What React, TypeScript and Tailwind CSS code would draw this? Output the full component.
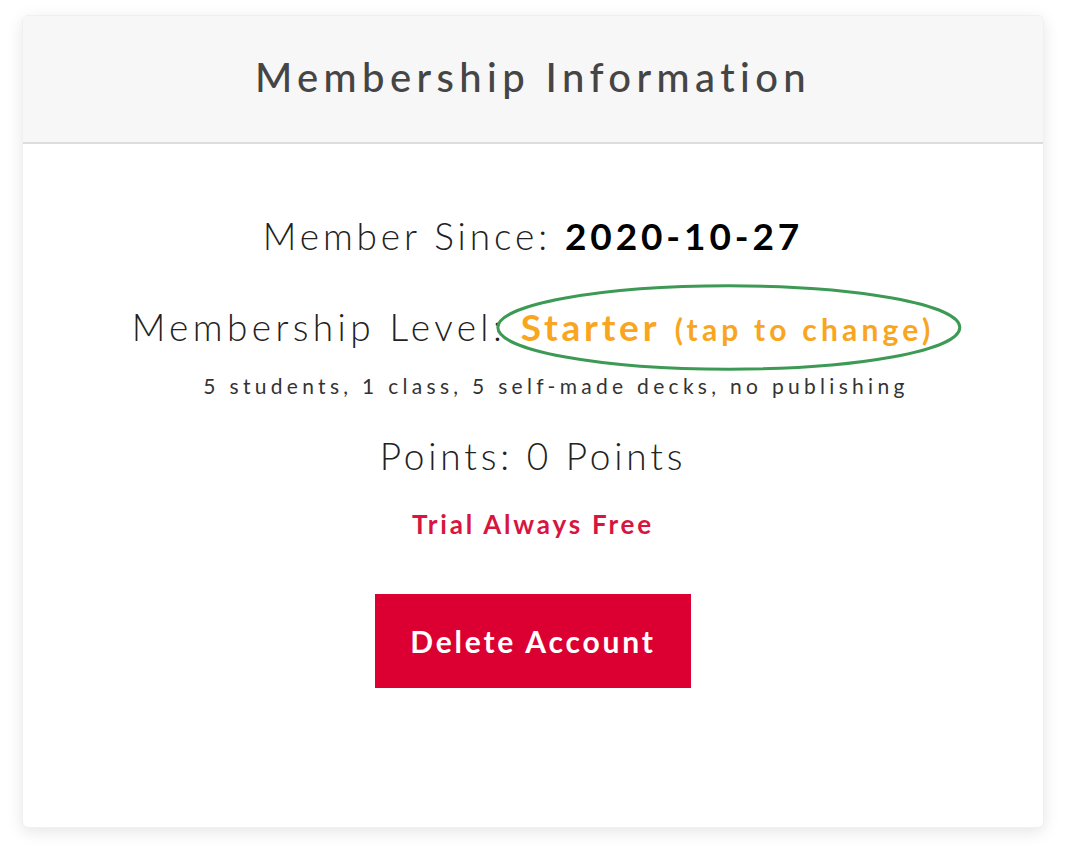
import React from "react";

export default function App() {
  return (
    <div className="min-h-[850px] w-[1073px] bg-white pt-[15px] pl-[22px]" style={{ fontFamily: "Lato, 'Noto Sans', sans-serif" }}>
      <div className="w-[1022px] h-[813px] rounded-[6px] bg-white shadow-[0_4px_16px_rgba(0,0,0,0.10)] border border-[#f0f0f0] overflow-hidden flex flex-col">
        <div className="h-[128px] bg-[#f7f7f7] border-b-2 border-[#dcdcdc] flex items-center justify-center">
          <h1 className="text-[40px] font-medium text-[#454545] tracking-[5.4px] leading-none mt-[-4px]">Membership Information</h1>
        </div>
        <div className="flex flex-col items-center">
          <div className="mt-[70px] text-[37px] leading-[44px] text-[#222] tracking-[3.9px] font-light">
            Member Since: <span className="font-bold text-black tracking-[3.9px]">2020-10-27</span>
          </div>
          <div className="mt-[47px] text-[37px] leading-[44px] text-[#222] tracking-[4.4px] font-light">
            Membership Level:{" "}
            <span className="relative">
              <span className="font-bold text-[#f9a51e] tracking-[3.8px]">Starter</span>{" "}
              <span className="font-bold text-[#f9a51e] text-[30px] tracking-[4.2px]">(tap to change)</span>
              <svg className="absolute left-[-25px] top-[-20px] w-[calc(100%+52px)] h-[calc(100%+42px)] pointer-events-none overflow-visible" viewBox="0 0 100 100" preserveAspectRatio="none">
                <ellipse cx="50" cy="50" rx="49.6" ry="48" fill="none" stroke="#3d9a55" strokeWidth="3" vectorEffect="non-scaling-stroke" />
              </svg>
            </span>
          </div>
          <div className="mt-[22px] pl-[46px] text-[21px] leading-[26px] text-[#333] tracking-[4.3px]">
            5 students, 1 class, 5 self-made decks, no publishing
          </div>
          <div className="mt-[35px] text-[37px] leading-[44px] text-[#222] tracking-[3.8px] font-light">
            Points: 0 Points
          </div>
          <div className="mt-[29px] text-[26px] leading-[34px] font-bold text-[#d8153f] tracking-[2.8px]">
            Trial Always Free
          </div>
          <button className="mt-[53px] w-[316px] h-[94px] bg-[#dc0032] text-white text-[30px] font-bold tracking-[2.8px]">
            Delete Account
          </button>
        </div>
      </div>
    </div>
  );
}
